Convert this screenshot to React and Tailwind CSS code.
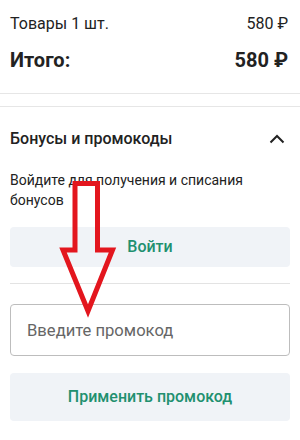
import React from 'react';

const ChevronUp = () => (
  <svg width="16" height="10" viewBox="0 0 16 10" fill="none">
    <path d="M1.5 8.5L8 2l6.5 6.5" stroke="#222" strokeWidth="2" />
  </svg>
);

// red hand-drawn arrow pointing at the promo field
const RedArrow = () => (
  <svg className="absolute left-0 top-0 pointer-events-none" width="300" height="440">
    <polygon
      points="75,183.5 97.5,183.5 97.5,250 112.5,250 88,311 63,250 75,250"
      fill="none"
      stroke="#e3161e"
      strokeWidth="5"
      strokeLinejoin="miter"
    />
  </svg>
);

const App = () => {
  return (
    <div className="relative w-[300px] h-[440px] bg-white overflow-hidden text-[#222] font-['Roboto',sans-serif]">
      <div className="px-[10px] pr-3 pt-3 pb-[19px] border-b border-[#e6e6e6]">
        <div className="flex justify-between items-center h-6 text-base">
          <span>Товары 1 шт.</span>
          <span>580 ₽</span>
        </div>
        <div className="flex justify-between items-center h-7 mt-[10px] text-xl font-bold">
          <span>Итого:</span>
          <span>580 ₽</span>
        </div>
      </div>

      <div className="h-3" />

      <div className="border-t border-[#e6e6e6] px-[10px] pt-5">
        <div className="flex justify-between items-center h-6">
          <span className="text-base font-medium">Бонусы и промокоды</span>
          <span className="mr-[5px] flex items-center">
            <ChevronUp />
          </span>
        </div>

        <p className="mt-[19px] text-sm leading-5">
          Войдите для получения и списания бонусов
        </p>

        <button className="mt-[17px] w-full h-10 rounded bg-[#f0f3f7] text-base font-medium text-[#21906f]">
          Войти
        </button>

        <div className="mt-4 border-t border-[#e3e3e3]" />

        <input
          className="mt-5 w-full h-[52px] rounded border border-[#bdbdbd] px-4 text-[16.6px] placeholder-[#666] outline-none"
          placeholder="Введите промокод"
        />

        <button className="mt-[17px] w-full h-12 rounded bg-[#f0f3f7] text-base font-medium text-[#21906f]">
          Применить промокод
        </button>
      </div>

      <RedArrow />
    </div>
  );
};

export default App;
